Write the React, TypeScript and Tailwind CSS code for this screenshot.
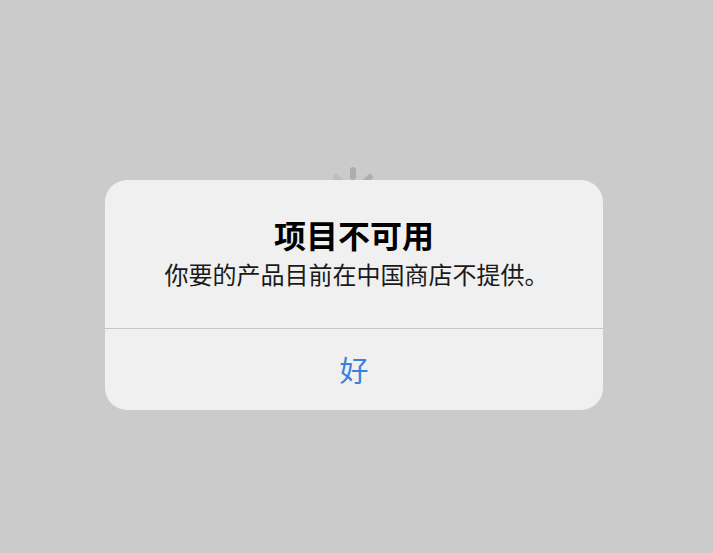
// Alert shown over a loading screen
function Spinner() {
  const bars = Array.from({ length: 8 }, (_, i) => i);
  return (
    <svg width="64" height="64" viewBox="-32 -32 64 64" className="absolute left-[321px] top-[162px]">
      {bars.map((i) => (
        <rect
          key={i}
          x={-3}
          y={-27}
          width={6}
          height={13}
          rx={3}
          fill="#adadad"
          opacity={1 - i * 0.08}
          transform={`rotate(${i * 45})`}
        />
      ))}
    </svg>
  );
}

export default function App() {
  return (
    <div
      className="relative flex h-[553px] w-[713px] flex-col items-center overflow-hidden bg-[#cbcbcb] pt-[180px]"
      style={{ fontFamily: '"Noto Sans CJK SC", "Noto Sans", sans-serif' }}
    >
      <Spinner />
      <div className="relative mr-[5px] flex w-[498px] flex-col overflow-hidden rounded-[22px] bg-[#f0f0f0]">
        <div className="flex flex-col items-center pt-[35px] pb-[39px]">
          <h1 className="text-[32px] font-bold leading-[38px] text-black">项目不可用</h1>
          <p className="mt-[6px] pl-[5px] text-[24px] leading-[30px] text-[#1a1a1a]">你要的产品目前在中国商店不提供。</p>
        </div>
        <div className="h-px bg-[#c6c6c6]" />
        <button type="button" className="flex h-[81px] items-center justify-center text-[29px] text-[#3a80dd]">
          好
        </button>
      </div>
    </div>
  );
}
